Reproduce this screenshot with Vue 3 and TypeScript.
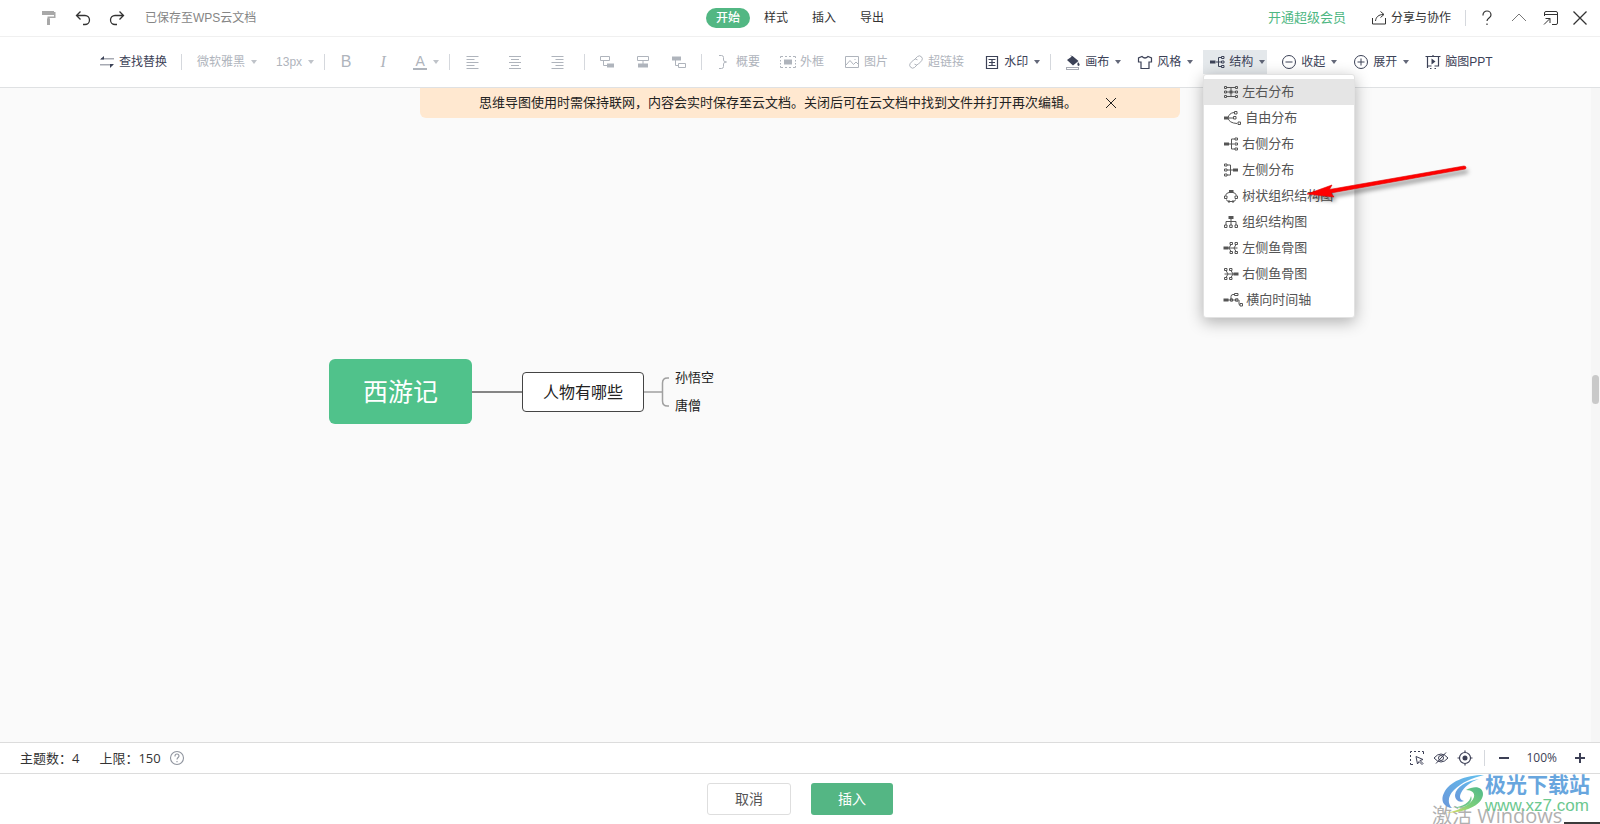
<script setup lang="ts">
import { h, ref, type FunctionalComponent } from 'vue'

interface Glyph {
  w?: number
  line?: string
  fill?: string
  pale?: string
  sw?: number
}

const glyphs: Record<string, Glyph> = {
  brush: { fill: 'M1 1h12v4H1zM13 2h1.500v6H8.500v1h-2V6.500h6.500zM6 8.500h3V15H6z' },
  undo: { line: 'M5.500 1.500 1.500 5.500l4 4M1.500 5.500H10a4.500 4.500 0 0 1 0 9H8', sw: 1.3 },
  redo: { line: 'M10.500 1.500l4 4-4 4M14.500 5.500H6a4.500 4.500 0 0 0 0 9h2', sw: 1.3 },
  share: { line: 'M1.500 8v6h13V8M4.500 11c.5-4 3-6.500 8-6.500M9.500 1.500l3.500 3-3.500 3' },
  help: { line: 'M4 5.500V5a4 4 0 0 1 8 0c0 3-4 3-4 6M8 13.500V15', sw: 1.2 },
  up: { line: 'M1 11l7-7 7 7' },
  popout: { line: 'M1.500 6V3q0-1.500 1.500-1.500h10q1.500 0 1.500 1.500v10q0 1.500-1.500 1.500H9M1.500 4.500h13M1 14.500l6-6M2.500 8.500H7V13' },
  close: { line: 'M1.500 1.500l13 13M14.500 1.500l-13 13', sw: 1.3 },
  swap: { pale: 'M2 4h13v1.500H2zM1 10h13v1.500H1z', fill: 'M5 2v3.500H1zM11 10h4l-4 4z' },
  alignLeft: { line: 'M1.500 2.500h12M1.500 5.500h8M1.500 8.500h12M1.500 11.500h8M1.500 14.500h12' },
  alignCenter: { line: 'M2 2.500h12M4 5.500h8M2 8.500h12M4 11.500h8M2 14.500h12' },
  alignRight: { line: 'M2.500 2.500h12M6.500 5.500h8M2.500 8.500h12M6.500 11.500h8M2.500 14.500h12' },
  childNode: { line: 'M1.500 2.500h9v4h-9zM4.500 6.500v5H8', fill: 'M8 9.500h7v4H8z' },
  sameNode: { line: 'M2.500 2.500h11v4h-11zM8 6.500V10', fill: 'M3 9.500h10v4H3z' },
  parentNode: { line: 'M4.500 6v5.500h3M7.500 9.500h7v4h-7z', fill: 'M1 2.500h9v4H1z' },
  summary: { line: 'M3 1.500h2.500q2 0 2 2V6q0 2 3 2-3 0-3 2v2.500q0 2-2 2H3' },
  frame: { line: 'M.5 4V2.500H3M5 2.500h2M9 2.500h2M13 2.500h2.500V4M15.500 6v1.500M15.500 9v1.500M15.500 12v1.500H13M11 13.500H9M7 13.500H5M3 13.500H.5V12M.5 10.500V9M.5 7.500V6', fill: 'M4 5.500h8v5H4z' },
  image: { line: 'M1.500 2.500h13v11h-13zM2 11l4-4.500 3.500 4L12 8l2.500 2.500M10.500 5.500h1' },
  link: { line: 'M7 5l2.500-2.500a3 3 0 0 1 4.200 4.200L10.500 10a3 3 0 0 1-4 .2M9 11l-2.500 2.500a3 3 0 0 1-4.200-4.200L5.500 6a3 3 0 0 1 4-.2' },
  watermark: { line: 'M2.500 2.500h11v12h-11zM4.500 5.500h7M5 8.500h6M4.500 11.500h7M8 5.500v6', sw: 1.2 },
  paint: { fill: 'M2 6l5.500-4 6 5L8 11.500zM13 8q3 3 .5 4-2-.5-.5-4z', line: 'M6 1.500l3 3', pale: 'M1 13h13v3H1zM2 14v1h11v-1z' },
  shirt: { line: 'M5 2.500q3 3 6 0l3.500 1.500v4h-2.500v6.500h-8V8H1.500V4z', sw: 1.2 },
  structure: { line: 'M7 8h5M12 3.500H9.500v9H12M12.500 2.500h2.500v2h-2.500zM12.500 7h2.500v2h-2.500zM12.500 11.500h2.500v2h-2.500z', fill: 'M1 6.500h5.500v3H1z' },
  minusCircle: { line: 'M8 1.500a6.500 6.500 0 1 0 0 13a6.500 6.500 0 1 0 0-13M4.500 8h7' },
  plusCircle: { line: 'M8 1.500a6.500 6.500 0 1 0 0 13a6.500 6.500 0 1 0 0-13M4.500 8h7M8 4.500v7' },
  slides: { line: 'M.5 2.500h15M2.500 2.500v9.500h4M9.500 12h4V2.500M8 1v1.500M5 14.500h1.500M9.500 14.500H11M2.500 12v2', fill: 'M6.500 4.500l4 3-4 3z', sw: 1.2 },
  helpCircle: { line: 'M8 1.500a6.500 6.500 0 1 0 0 13a6.500 6.500 0 1 0 0-13M6 6.500V6a2 2 0 0 1 4 0c0 1.500-2 1.500-2 3.500M8 11v1.200', sw: 1.1 },
  select: { line: 'M1.500 3V1.500H3M5 1.500h2M9 1.500h2M13 1.500h1.500V4M1.500 5v2M1.500 9v2M1.500 13v1.500H4M7 6.500l7 3-3 1 3 3-1 1-3-3L8.500 14z' },
  eyeOff: { line: 'M1 8q7-8 14 0-7 8-14 0zM8 5.500a2.500 2.500 0 1 0 0 5a2.500 2.500 0 1 0 0-5M3 13.500L13 2.500' },
  locate: { line: 'M8 2.500a5.500 5.500 0 1 0 0 11a5.500 5.500 0 1 0 0-11M8 .5v2.500M8 13v2.500M.5 8H3M13 8h2.500', fill: 'M8 5.500a2.500 2.500 0 1 0 0 5a2.500 2.500 0 1 0 0-5', sw: 1.2 },
  minus: { fill: 'M3 7h10v2H3z' },
  plus: { fill: 'M3 7h4V3h2v4h4v2H9v4H7V9H3z' },
  both: { line: 'M1.500 2.500h2v2h-2zM1.500 7h2v2h-2zM1.500 11.500h2v2h-2zM12.500 2.500h2v2h-2zM12.500 7h2v2h-2zM12.500 11.500h2v2h-2zM3.500 3.500h9M3.500 12.500h9M3.500 8h9M8 3.500v9', fill: 'M6.500 6.500h3v3h-3z' },
  free: { w: 19, line: 'M5 8q1-5 6-5.500M5 8h5M5 8q1 5 9 5.500M11.500 1.500h2.500v2.500h-2.500zM10.500 6.500h2.500v2.500h-2.500zM15 12h2.500v2.500h-2.500z', fill: 'M1 6.500h4v3H1z' },
  right: { line: 'M5 8h6M12 3H8.500v10H12M12 2h2.500v2h-2.500zM12 7h2.500v2h-2.500zM12 12h2.500v2h-2.500z', fill: 'M1 6.500h5v3H1z' },
  left: { line: 'M4 8h6M4 3h3.500v10H4M1.500 2H4v2H1.500zM1.500 7H4v2H1.500zM1.500 12H4v2H1.500z', fill: 'M10 6.500h5v3h-5z' },
  tree: { line: 'M6 4.500q-3 .5-3.500 3M10 4.500q3 .5 3.500 3M1.500 8h2.500v2.500H1.500zM12 8h2.500v2.500H12zM3.500 11.500q.5 2 2 2M12.500 11.500q-.5 2-2 2M6.500 13.500h3', fill: 'M6 2h4.500v3H6zM5 12.500h2v2H5zM9 12.500h2v2H9z' },
  org: { line: 'M8 5v6M3 11V7.500h10V11M1.500 11H4v2.500H1.500zM6.700 11h2.500v2.500H6.700zM12 11h2.500v2.500H12z', fill: 'M5.500 2h5v3h-5z' },
  fishLeft: { line: 'M5 8h9.500M6 8l2-3.500M11 8l2-3.500M6 8l2 3.500M11 8l2 3.500M7 2.500h2.500v2H7zM12 2.500h2.500v2H12zM7 11.500h2.500v2H7zM12 11.500h2.500v2H12z', fill: 'M.5 6.500h5v3h-5z' },
  fishRight: { line: 'M1.500 8H11M10 8 8 4.500M5 8 3 4.500M10 8l-2 3.500M5 8l-2 3.500M1.500 2.500H4v2H1.500zM6.500 2.500H9v2H6.500zM1.500 11.500H4v2H1.500zM6.500 11.500H9v2H6.500z', fill: 'M10.500 6.500h5v3h-5z' },
  timeline: { w: 20, line: 'M5 8h10M8 8V4.500q0-2 2-2h1M7.500 6.800h2v2.400h-2zM11.500 1.500h3.500v2h-3.500zM12.500 6.800h2.500v2.400h-2.500zM16 8v4q0 1 1 1M17 11.500h2.500V14H17z', fill: 'M.5 6.500h5v3h-5z' },
}

const Icon: FunctionalComponent<{ name: string }> = (props) => {
  const g = glyphs[props.name]
  const w = g.w ?? 16
  return h('svg', { width: w, height: 16, viewBox: `0 0 ${w} 16`, 'aria-hidden': 'true' }, [
    g.pale ? h('path', { d: g.pale, fill: 'currentColor', opacity: 0.45, 'fill-rule': 'evenodd' }) : null,
    g.fill ? h('path', { d: g.fill, fill: 'currentColor' }) : null,
    g.line ? h('path', { d: g.line, fill: 'none', stroke: 'currentColor', 'stroke-width': g.sw ?? 1 }) : null,
  ])
}
Icon.props = ['name']

const tabs = ['开始', '样式', '插入', '导出']
const activeTab = ref('开始')

const insertTools = [
  { icon: 'summary', label: '概要' },
  { icon: 'frame', label: '外框' },
  { icon: 'image', label: '图片' },
  { icon: 'link', label: '超链接' },
]
const layouts = [
  { icon: 'both', label: '左右分布' },
  { icon: 'free', label: '自由分布' },
  { icon: 'right', label: '右侧分布' },
  { icon: 'left', label: '左侧分布' },
  { icon: 'tree', label: '树状组织结构图' },
  { icon: 'org', label: '组织结构图' },
  { icon: 'fishLeft', label: '左侧鱼骨图' },
  { icon: 'fishRight', label: '右侧鱼骨图' },
  { icon: 'timeline', label: '横向时间轴' },
]
const activeLayout = ref('左右分布')
const menuOpen = ref(true)
const noticeOpen = ref(true)
</script>

<template>
  <div class="page">
    <header class="titlebar">
      <div class="history">
        <button class="pale" aria-label="格式刷"><Icon name="brush" /></button>
        <button aria-label="撤销"><Icon name="undo" /></button>
        <button aria-label="恢复"><Icon name="redo" /></button>
        <span class="saved">已保存至WPS云文档</span>
      </div>
      <nav class="tabs">
        <button v-for="t in tabs" :key="t" class="tab" :class="{ active: t === activeTab }" @click="activeTab = t">{{ t }}</button>
      </nav>
      <div class="account">
        <a class="vip" href="#">开通超级会员</a>
        <button class="share"><Icon name="share" />分享与协作</button>
        <i class="sep"></i>
        <div class="window">
          <button aria-label="帮助"><Icon name="help" /></button>
          <button class="thin" aria-label="收起工具栏"><Icon name="up" /></button>
          <button aria-label="弹出"><Icon name="popout" /></button>
        </div>
        <button class="exit" aria-label="关闭"><Icon name="close" /></button>
      </div>
    </header>

    <div class="toolbar">
      <button class="tool"><Icon name="swap" />查找替换</button>
      <i class="sep"></i>
      <div class="fonts off">
        <button class="tool">微软雅黑<i class="caret"></i></button>
        <button class="tool">13px<i class="caret"></i></button>
      </div>
      <i class="sep near"></i>
      <div class="styles off">
        <button class="letter" aria-label="加粗">B</button>
        <button class="letter italic" aria-label="斜体">I</button>
        <button class="tool"><span class="letter under">A</span><i class="caret"></i></button>
      </div>
      <i class="sep near"></i>
      <div class="aligns off">
        <button aria-label="左对齐"><Icon name="alignLeft" /></button>
        <button aria-label="居中对齐"><Icon name="alignCenter" /></button>
        <button aria-label="右对齐"><Icon name="alignRight" /></button>
      </div>
      <i class="sep"></i>
      <div class="nodes off">
        <button aria-label="子主题"><Icon name="childNode" /></button>
        <button aria-label="同级主题"><Icon name="sameNode" /></button>
        <button aria-label="父主题"><Icon name="parentNode" /></button>
      </div>
      <i class="sep"></i>
      <div class="inserts">
        <button v-for="t in insertTools" :key="t.label" class="tool off"><Icon :name="t.icon" />{{ t.label }}</button>
        <button class="tool"><Icon name="watermark" />水印<i class="caret"></i></button>
      </div>
      <i class="sep near"></i>
      <div class="views">
        <button class="tool"><Icon name="paint" />画布<i class="caret"></i></button>
        <button class="tool"><Icon name="shirt" />风格<i class="caret"></i></button>
        <div class="dropdown">
          <button class="tool open" :aria-expanded="menuOpen" @click="menuOpen = !menuOpen"><Icon name="structure" />结构<i class="caret"></i></button>
          <div v-if="menuOpen" class="menu">
            <button v-for="l in layouts" :key="l.label" class="entry" :class="{ active: l.label === activeLayout }" @click="activeLayout = l.label">
              <Icon :name="l.icon" />{{ l.label }}
            </button>
          </div>
        </div>
        <button class="tool"><Icon name="minusCircle" />收起<i class="caret"></i></button>
        <button class="tool"><Icon name="plusCircle" />展开<i class="caret"></i></button>
        <button class="tool"><Icon name="slides" />脑图PPT</button>
      </div>
    </div>

    <main class="canvas">
      <div v-if="noticeOpen" class="notice">
        <span>思维导图使用时需保持联网，内容会实时保存至云文档。关闭后可在云文档中找到文件并打开再次编辑。</span>
        <button aria-label="关闭提示" @click="noticeOpen = false">
          <svg width="12" height="12" viewBox="0 0 12 12"><path d="M1 1l10 10M11 1L1 11" stroke="currentColor" fill="none" /></svg>
        </button>
      </div>
      <svg class="links" width="400" height="80" viewBox="0 0 400 80" fill="none">
        <path d="M143 33h50" stroke="#858585" stroke-width="2" />
        <path d="M315 33h18M340 19h-1.500q-5 0-5 5v18q0 5 5 5h1.500" stroke="#a0a0a0" stroke-width="1.500" />
      </svg>
      <div class="node root">西游记</div>
      <div class="node topic">人物有哪些</div>
      <div class="node leaf first">孙悟空</div>
      <div class="node leaf second">唐僧</div>
      <div class="track"><div class="thumb"></div></div>
    </main>

    <div class="status">
      <span>主题数：4</span>
      <span>上限：150</span>
      <button class="hint" aria-label="说明"><Icon name="helpCircle" /></button>
      <div class="zoom">
        <button aria-label="框选"><Icon name="select" /></button>
        <button aria-label="隐藏"><Icon name="eyeOff" /></button>
        <button aria-label="定位"><Icon name="locate" /></button>
        <i class="sep"></i>
        <button aria-label="缩小"><Icon name="minus" /></button>
        <span class="percent">100%</span>
        <button aria-label="放大"><Icon name="plus" /></button>
      </div>
    </div>

    <footer class="actions">
      <button class="cancel">取消</button>
      <button class="confirm">插入</button>
    </footer>

    <svg class="arrow" width="180" height="50" viewBox="0 0 180 50">
      <path d="M7 34 32 25 29.500 29.500 164 6q2 0 2 1.500t-1 1.500L31 33l3 4z" fill="#f00" stroke="#e00000" stroke-width="0.600" />
    </svg>

    <div class="watermark">
      <span class="activate">激活 Windows</span>
      <svg width="44" height="40" viewBox="0 0 44 40">
        <defs>
          <linearGradient id="wave" x1="0" y1="1" x2="1" y2="0">
            <stop offset="0" stop-color="#6a97da" />
            <stop offset="1" stop-color="#62c0ee" />
          </linearGradient>
          <linearGradient id="leaf" x1="0" y1="1" x2="1" y2="0">
            <stop offset="0" stop-color="#e8df62" />
            <stop offset="0.450" stop-color="#7fd07a" />
            <stop offset="1" stop-color="#4fb98c" />
          </linearGradient>
        </defs>
        <path d="M43 1C24 1 8 8 3 19c-4 8 0 14 8 15-5-5-4-12 2-18C21 8 31 4 43 1z" fill="url(#wave)" />
        <path d="M38 5C25 7 15 13 14 21c0 5 4 8 9 6-4-1-5-4-3-8 3-6 9-11 18-14z" fill="url(#wave)" />
        <path d="M25 16c9-5 17-3 17 4 0 9-13 18-37 19 15-3 26-9 28-16 1-4-2-7-8-7z" fill="url(#leaf)" />
        <path d="M11 33c9 1 18-4 19-11 3 6-6 14-19 11z" fill="#6cc68a" />
      </svg>
      <div class="site">
        <strong>极光下载站</strong>
        <span>www.xz7.com</span>
      </div>
      <i class="edge"></i>
    </div>
  </div>
</template>

<style>
html,
body {
  margin: 0;
  overflow: hidden;
}
</style>

<style scoped>
.page {
  position: relative;
  display: flex;
  flex-direction: column;
  height: 100vh;
  overflow: hidden;
  background: #fff;
  color: #333;
  font: 12px/20px "Liberation Sans", "Noto Sans CJK SC", sans-serif;
}
button {
  display: flex;
  align-items: center;
  margin: 0;
  padding: 0;
  border: 0;
  background: none;
  color: inherit;
  font: inherit;
  white-space: nowrap;
}
svg {
  display: block;
  flex: none;
}
.sep {
  width: 1px;
  height: 16px;
  background: #d5d8dd;
  margin: 0 14px;
}
.sep.near {
  margin-left: 10px;
}

.titlebar {
  display: grid;
  grid-template-columns: 1fr auto 1fr;
  align-items: center;
  height: 36px;
  border-bottom: 1px solid #f0f0f0;
}
.history {
  display: flex;
  align-items: center;
  gap: 18px;
  padding-left: 41px;
}
.pale {
  color: #a8a8a8;
}
.saved {
  margin-left: 2px;
  color: #858585;
}
.tabs {
  display: flex;
  gap: 4px;
}
.tab {
  height: 20px;
  padding: 0 10px;
  border-radius: 10px;
}
.tab.active {
  background: #52b783;
  color: #fff;
  font-weight: 500;
}
.account {
  display: flex;
  align-items: center;
  justify-content: flex-end;
  padding-right: 12px;
}
.account .sep {
  margin-right: 13px;
}
.vip {
  margin-right: 25px;
  color: #4fb783;
  font-size: 13px;
  text-decoration: none;
}
.share {
  gap: 4px;
}
.window {
  display: flex;
  gap: 16px;
}
.window .thin {
  color: #777;
}
.exit {
  margin-left: 13px;
}

.toolbar {
  position: relative;
  z-index: 2;
  display: flex;
  align-items: center;
  height: 50px;
  padding-left: 99px;
  border-bottom: 1px solid #dfe1e3;
  background: #fff;
  color: #3c4257;
}
.tool {
  gap: 4px;
  height: 24px;
}
.off {
  color: #afb4bc;
}
.caret {
  width: 0;
  height: 0;
  margin-left: 2px;
  border: 3px solid transparent;
  border-top: 4px solid currentColor;
  border-bottom: 0;
  opacity: 0.8;
}
.fonts,
.styles,
.aligns,
.nodes,
.inserts,
.views {
  display: flex;
  align-items: center;
}
.fonts {
  gap: 19px;
  padding-left: 1px;
}
.styles {
  gap: 23px;
}
.aligns {
  gap: 26px;
  padding: 0 5px 0 1px;
}
.nodes {
  gap: 20px;
}
.inserts {
  gap: 20px;
}
.views {
  gap: 16px;
}
.letter {
  justify-content: center;
  width: 14px;
  font-size: 16px;
  text-align: center;
}
.letter.italic {
  font-family: "Liberation Serif", serif;
  font-style: italic;
}
.letter.under {
  height: 14px;
  border-bottom: 2px solid currentColor;
  font-size: 14px;
  line-height: 14px;
}
.dropdown {
  position: relative;
  margin: 0 -2px 0 -6px;
}
.tool.open {
  padding: 0 2px 0 6px;
  background: #e4e8eb;
}
.menu {
  position: absolute;
  top: 24px;
  left: 0;
  width: 150px;
  padding: 4px 0;
  border: 1px solid #e2e2e2;
  border-radius: 3px;
  background: #fff;
  box-shadow: 0 4px 16px rgba(0, 0, 0, 0.3);
}
.entry {
  gap: 3px;
  width: 100%;
  height: 26px;
  padding-left: 19px;
  color: #555;
  font-size: 13px;
}
.entry.active {
  background: #e5e5e5;
}

.canvas {
  position: relative;
  flex: 1;
  background: #fafafa;
}
.notice {
  display: flex;
  align-items: center;
  justify-content: space-between;
  box-sizing: border-box;
  width: 760px;
  height: 30px;
  margin: 0 auto;
  padding: 0 63px 0 59px;
  border-radius: 0 0 6px 6px;
  background: #ffe8d0;
  color: #222;
  font-size: 13px;
}
.node {
  position: absolute;
  box-sizing: border-box;
  white-space: nowrap;
}
.root {
  left: 329px;
  top: 271px;
  width: 143px;
  padding-top: 2px;
  border-radius: 6px;
  background: #50c28b;
  color: #fff;
  font-size: 25px;
  line-height: 63px;
  text-align: center;
}
.topic {
  left: 522px;
  top: 284px;
  width: 122px;
  padding-top: 2px;
  border: 1px solid #444;
  border-radius: 4px;
  background: #fff;
  color: #222;
  font-size: 16px;
  line-height: 36px;
  text-align: center;
}
.leaf {
  left: 675px;
  color: #222;
  font-size: 13px;
}
.first {
  top: 280px;
}
.second {
  top: 308px;
}
.links {
  position: absolute;
  left: 329px;
  top: 271px;
}
.track {
  position: absolute;
  top: 0;
  right: 0;
  bottom: 0;
  width: 9px;
  background: #f6f6f6;
}
.thumb {
  height: 29px;
  margin: 287px 1px 0;
  border-radius: 4px;
  background: #c9c9c9;
}

.status {
  display: flex;
  align-items: center;
  gap: 20px;
  height: 30px;
  padding: 0 12px 0 20px;
  border-top: 1px solid #dcdcdc;
  font-family: "Open Sans", "Noto Sans CJK SC", sans-serif;
  font-size: 13px;
}
.hint {
  margin-left: -12px;
  color: #8f949e;
}
.zoom {
  display: flex;
  align-items: center;
  gap: 8px;
  margin-left: auto;
  color: #3c3f55;
}
.zoom .sep {
  margin: 0 3px;
}
.percent {
  margin: 0 7px 0 6px;
  font-size: 12px;
}

.actions {
  display: flex;
  align-items: center;
  justify-content: center;
  gap: 20px;
  height: 50px;
  border-top: 1px solid #dcdcdc;
  font-size: 14px;
}
.actions button {
  justify-content: center;
  box-sizing: border-box;
  width: 82px;
  height: 32px;
  border-radius: 3px;
}
.actions .cancel {
  width: 84px;
  border: 1px solid #dedede;
  color: #555;
}
.actions .confirm {
  background: #54b684;
  color: #fff;
}

.arrow {
  position: absolute;
  z-index: 3;
  left: 1300px;
  top: 160px;
  filter: drop-shadow(2px 4px 2px rgba(0, 0, 0, 0.4));
}
.watermark {
  position: absolute;
  right: 10px;
  bottom: 8px;
  display: flex;
  pointer-events: none;
}
.activate {
  position: absolute;
  left: -9px;
  top: 28px;
  color: #b0b0b0;
  font: 20px/28px "Open Sans", "Noto Sans CJK SC", sans-serif;
  white-space: nowrap;
}
.watermark svg {
  position: relative;
}
.site {
  position: relative;
  display: flex;
  flex-direction: column;
  color: #6cc88f;
  font-size: 17px;
  line-height: 20px;
}
.site strong {
  color: #68a6de;
  font-size: 21px;
  line-height: 22px;
}
.edge {
  position: absolute;
  right: -10px;
  bottom: -8px;
  width: 36px;
  height: 2px;
  background: #3b3b3b;
}
</style>
